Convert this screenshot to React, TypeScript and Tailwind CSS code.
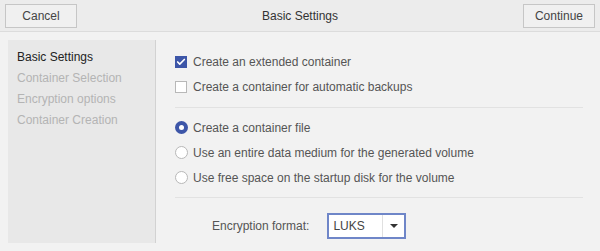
import { Check } from 'lucide-react';

const steps = ['Basic Settings', 'Container Selection', 'Encryption options', 'Container Creation'];

function Checkbox({ checked, label }: { checked?: boolean; label: string }) {
  return (
    <div className="flex items-center h-[25px]">
      {checked ? (
        <span className="w-[12px] h-[12px] bg-[#3d56a8] flex items-center justify-center">
          <Check className="w-[10px] h-[10px] text-white" strokeWidth={4} />
        </span>
      ) : (
        <span className="w-[12px] h-[12px] bg-white border border-[#b8b8b8]" />
      )}
      <span className="ml-[6px] text-[#555]">{label}</span>
    </div>
  );
}

function Radio({ checked, label }: { checked?: boolean; label: string }) {
  return (
    <div className="flex items-center h-[25px]">
      {checked ? (
        <span className="w-[13px] h-[13px] rounded-full bg-[#3d56a8] flex items-center justify-center">
          <span className="w-[5px] h-[5px] rounded-full bg-white" />
        </span>
      ) : (
        <span className="w-[13px] h-[13px] rounded-full bg-white border border-[#b8b8b8]" />
      )}
      <span className="ml-[5px] text-[#555]">{label}</span>
    </div>
  );
}

function App() {
  return (
    <div className="w-[600px] h-[251px] bg-[#f2f2f2] text-[12px] overflow-hidden" style={{ fontFamily: '"Liberation Sans", Arial, sans-serif' }}>
      <header className="h-[32px] bg-[#ececec] border-b border-[#dcdcdc] flex items-center justify-between px-[5px]">
        <button className="w-[72px] h-[24px] border border-[#c6c6c6] bg-[#f0f0f0] text-[#444]">Cancel</button>
        <span className="text-[#333]">Basic Settings</span>
        <button className="w-[72px] h-[24px] border border-[#c6c6c6] bg-[#f0f0f0] text-[#444]">Continue</button>
      </header>
      <div className="flex pl-[8px] pt-[8px]">
        <nav className="w-[148px] h-[203px] bg-[#e8e8e8] border-r border-[#d2d2d2] pl-[9px] pt-[7px]">
          {steps.map((s, i) => (
            <div key={s} className={`h-[21px] leading-[21px] ${i === 0 ? 'text-[#222]' : 'text-[#b4b4b4]'}`}>{s}</div>
          ))}
        </nav>
        <main className="flex-1 pl-[19px] pr-[17px]">
          <div className="pt-[9px] pb-[8px] border-b border-[#e2e2e2]">
            <Checkbox checked label="Create an extended container" />
            <Checkbox label="Create a container for automatic backups" />
          </div>
          <div className="pt-[7px] pb-[7px] border-b border-[#e2e2e2]">
            <Radio checked label="Create a container file" />
            <Radio label="Use an entire data medium for the generated volume" />
            <Radio label="Use free space on the startup disk for the volume" />
          </div>
          <div className="flex items-center pt-[15px] pl-[37px]">
            <span className="text-[#555] mr-[18px]">Encryption format:</span>
            <div className="w-[79px] h-[26px] border-2 border-[#6f86c8] bg-white flex">
              <span className="flex-1 pl-[4px] leading-[22px] text-[#444]">LUKS</span>
              <span className="w-[22px] border-l border-[#e0e0e0] flex items-center justify-center">
                <span className="w-0 h-0 border-l-[4px] border-r-[4px] border-t-[4px] border-l-transparent border-r-transparent border-t-[#333]" />
              </span>
            </div>
          </div>
        </main>
      </div>
    </div>
  );
}

export default App;
